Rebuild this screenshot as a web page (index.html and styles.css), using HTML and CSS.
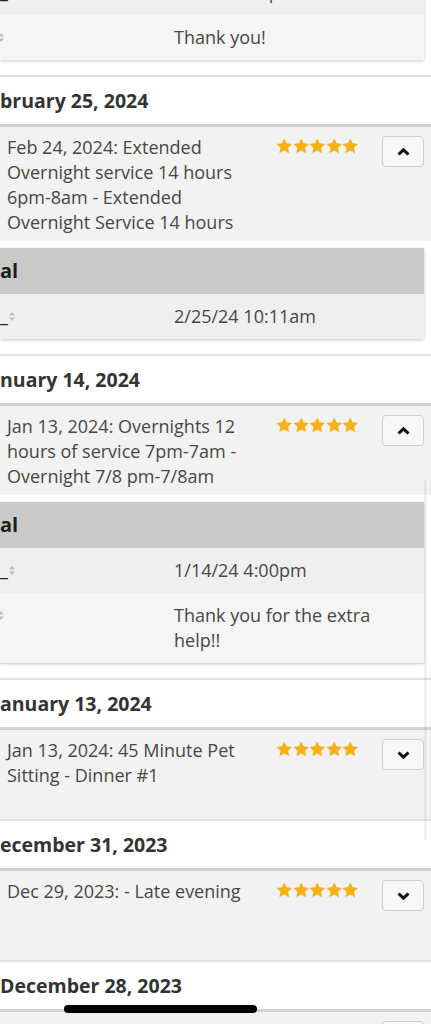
FILE: index.html
```html
<!DOCTYPE html>
<html lang="en">
<head>
    <meta charset="UTF-8">
    <meta name="viewport" content="width=device-width, initial-scale=1.0">
    <title>Visit History</title>
    <link rel="stylesheet" href="styles.css">
</head>
<body>
    <svg width="0" height="0" class="defs">
        <defs>
            <path id="star" d="M8 0.4l2.3 4.8 5.3 0.6-3.9 3.6 1 5.3L8 12.1l-4.7 2.6 1-5.3L0.4 5.8l5.3-0.6z"/>
            <g id="sort">
                <path d="M3 0L6 3.5H0z"/>
                <path d="M3 9L0 5.5H6z"/>
            </g>
        </defs>
    </svg>

    <div class="page">
        <!-- end of previous visit -->
        <div class="details first">
            <div class="table">
                <div class="row dark">
                    <div class="cell-key"><span class="under">_</span><svg class="sort" viewBox="0 0 6 9"><use href="#sort"/></svg></div>
                    <div class="cell-val">3/4/24 6:12pm</div>
                </div>
                <div class="row light">
                    <div class="cell-key"><svg class="sort cut" viewBox="0 0 6 9"><use href="#sort"/></svg></div>
                    <div class="cell-val">Thank you!</div>
                </div>
            </div>
        </div>

        <div class="day">
            <div class="day-title">bruary 25, 2024</div>
            <div class="item">
                <div class="item-text">Feb 24, 2024: Extended Overnight service 14 hours 6pm-8am - Extended Overnight Service 14 hours</div>
                <div class="stars">
                    <svg viewBox="0 0 16 16"><use href="#star"/></svg><svg viewBox="0 0 16 16"><use href="#star"/></svg><svg viewBox="0 0 16 16"><use href="#star"/></svg><svg viewBox="0 0 16 16"><use href="#star"/></svg><svg viewBox="0 0 16 16"><use href="#star"/></svg>
                </div>
                <button class="toggle"><svg viewBox="0 0 13 8"><polyline points="1.5,6.5 6.5,1.8 11.5,6.5"/></svg></button>
            </div>
            <div class="details">
                <div class="table">
                    <div class="table-head">al</div>
                    <div class="row dark">
                        <div class="cell-key"><span class="under">_</span><svg class="sort" viewBox="0 0 6 9"><use href="#sort"/></svg></div>
                        <div class="cell-val">2/25/24 10:11am</div>
                    </div>
                </div>
            </div>
        </div>

        <div class="day">
            <div class="day-title">nuary 14, 2024</div>
            <div class="item">
                <div class="item-text">Jan 13, 2024: Overnights 12 hours of service 7pm-7am - Overnight 7/8 pm-7/8am</div>
                <div class="stars">
                    <svg viewBox="0 0 16 16"><use href="#star"/></svg><svg viewBox="0 0 16 16"><use href="#star"/></svg><svg viewBox="0 0 16 16"><use href="#star"/></svg><svg viewBox="0 0 16 16"><use href="#star"/></svg><svg viewBox="0 0 16 16"><use href="#star"/></svg>
                </div>
                <button class="toggle"><svg viewBox="0 0 13 8"><polyline points="1.5,6.5 6.5,1.8 11.5,6.5"/></svg></button>
            </div>
            <div class="details">
                <div class="table">
                    <div class="table-head">al</div>
                    <div class="row dark">
                        <div class="cell-key"><span class="under">_</span><svg class="sort" viewBox="0 0 6 9"><use href="#sort"/></svg></div>
                        <div class="cell-val">1/14/24 4:00pm</div>
                    </div>
                    <div class="row light">
                        <div class="cell-key"><svg class="sort cut" viewBox="0 0 6 9"><use href="#sort"/></svg></div>
                        <div class="cell-val">Thank you for the extra help!!</div>
                    </div>
                </div>
            </div>
        </div>

        <div class="day">
            <div class="day-title">anuary 13, 2024</div>
            <div class="item">
                <div class="item-text">Jan 13, 2024: 45 Minute Pet Sitting - Dinner #1</div>
                <div class="stars">
                    <svg viewBox="0 0 16 16"><use href="#star"/></svg><svg viewBox="0 0 16 16"><use href="#star"/></svg><svg viewBox="0 0 16 16"><use href="#star"/></svg><svg viewBox="0 0 16 16"><use href="#star"/></svg><svg viewBox="0 0 16 16"><use href="#star"/></svg>
                </div>
                <button class="toggle"><svg viewBox="0 0 13 8"><polyline points="1.5,1.5 6.5,6.2 11.5,1.5"/></svg></button>
            </div>
        </div>

        <div class="day">
            <div class="day-title">ecember 31, 2023</div>
            <div class="item">
                <div class="item-text">Dec 29, 2023: - Late evening</div>
                <div class="stars">
                    <svg viewBox="0 0 16 16"><use href="#star"/></svg><svg viewBox="0 0 16 16"><use href="#star"/></svg><svg viewBox="0 0 16 16"><use href="#star"/></svg><svg viewBox="0 0 16 16"><use href="#star"/></svg><svg viewBox="0 0 16 16"><use href="#star"/></svg>
                </div>
                <button class="toggle"><svg viewBox="0 0 13 8"><polyline points="1.5,1.5 6.5,6.2 11.5,1.5"/></svg></button>
            </div>
        </div>

        <div class="day">
            <div class="day-title">December 28, 2023</div>
            <div class="item">
                <div class="item-text"></div>
                <div class="stars"></div>
                <button class="toggle"><svg viewBox="0 0 13 8"><polyline points="1.5,1.5 6.5,6.2 11.5,1.5"/></svg></button>
            </div>
        </div>
    </div>

    <div class="scroll-bar"></div>
    <div class="home-bar"></div>
</body>
</html>
```

FILE: styles.css
```css
body {
    margin: 0;
    font-family: "Open Sans", Arial, sans-serif;
    font-size: 18px;
    line-height: 25px;
    color: #474747;
    background: #fff;
    overflow: hidden;
    height: 1024px;
}
.defs {
    position: absolute;
}
.page {
    margin-top: -30px;
}
.details {
    padding: 7px 7px 15px 0;
    background: #fff;
}
.details.first {
    padding-top: 0;
    padding-bottom: 15px;
}
.table {
    box-shadow: 0 1px 3px rgba(0, 0, 0, 0.22);
}
.table-head {
    background: #c9c9c9;
    height: 46px;
    line-height: 46px;
    font-size: 20px;
    font-weight: bold;
    color: #1e1e1e;
}
.row {
    display: grid;
    grid-template-columns: 174px 1fr;
    padding: 10px 0;
}
.row.dark {
    background: #efefef;
}
.row.light {
    background: #f5f5f5;
}
.cell-key {
    display: flex;
    align-items: center;
    height: 25px;
}
.under {
    color: #222;
    line-height: 25px;
    margin-top: -2px;
}
.sort {
    width: 6px;
    height: 9px;
    fill: #bdbdbd;
    margin-left: 1px;
}
.sort.cut {
    margin-left: -2px;
}
.cell-val {
    padding-right: 10px;
}
.day {
    border-top: 2px solid #e1e1e1;
}
.day-title {
    height: 47px;
    line-height: 47px;
    font-size: 19.5px;
    font-weight: bold;
    color: #333;
    white-space: nowrap;
}
.item {
    display: flex;
    align-items: flex-start;
    box-sizing: border-box;
    border-top: 3px solid #d2d2d2;
    background: #f2f2f2;
    padding: 8px 7px 6px 7px;
    min-height: 92px;
}
.item-text {
    width: 245px;
    flex: none;
}
.stars {
    display: flex;
    margin-left: 24px;
    margin-top: 3px;
}
.stars svg {
    width: 16.5px;
    height: 16.5px;
    fill: #f7b118;
}
.toggle {
    margin-left: auto;
    margin-top: 1px;
    width: 42px;
    height: 31px;
    padding: 0;
    border: 1px solid #cfcfcf;
    border-radius: 4px;
    background: #f7f7f7;
    display: flex;
    align-items: center;
    justify-content: center;
    flex: none;
}
.toggle svg {
    width: 13px;
    height: 8px;
    fill: none;
    stroke: #111;
    stroke-width: 3;
}
.scroll-bar {
    position: fixed;
    left: 424px;
    top: 480px;
    width: 3px;
    height: 360px;
    background: rgba(0, 0, 0, 0.05);
    border-radius: 2px;
}
.home-bar {
    position: fixed;
    left: 64px;
    top: 1005px;
    width: 193px;
    height: 8px;
    border-radius: 4px;
    background: #000;
}
```
